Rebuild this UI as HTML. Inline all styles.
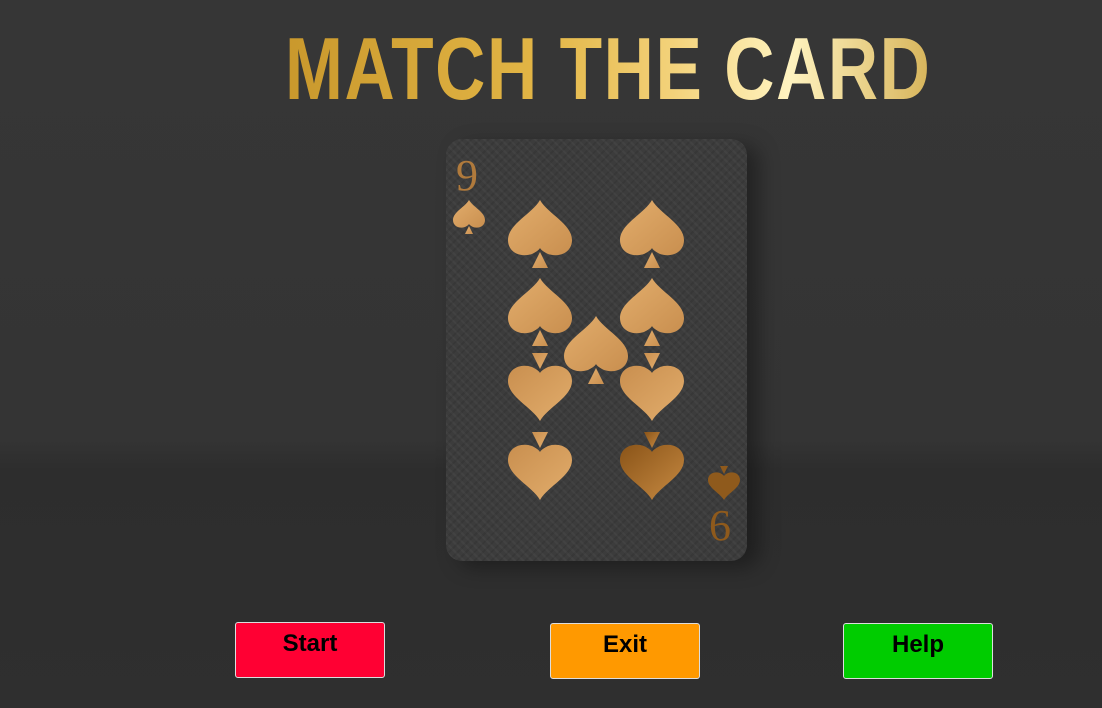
<!DOCTYPE html>
<html><head><meta charset="utf-8"><style>
html,body{margin:0;padding:0;}
body{width:1102px;height:708px;overflow:hidden;position:relative;
background:linear-gradient(#363636 0,#343434 440px,#2d2d2d 470px,#2f2f2f 708px);font-family:"Liberation Sans",sans-serif;}
.title{position:absolute;left:285px;top:26px;width:657px;height:90px;}
.title span{position:absolute;left:0;top:0;font-weight:bold;font-size:88px;line-height:86px;white-space:nowrap;
transform-origin:0 0;transform:scaleX(0.79);letter-spacing:2px;
background:linear-gradient(90deg,#c9982c 0%,#e3b646 40%,#f3d27a 60%,#fff3c0 78%,#d7b45a 100%);
-webkit-background-clip:text;background-clip:text;color:transparent;}
.card{position:absolute;left:446px;top:139px;width:301px;height:422px;border-radius:16px;
background:#3c3c3c;box-shadow:12px 6px 20px rgba(0,0,0,.35);
background-image:repeating-linear-gradient(45deg,rgba(255,255,255,.03) 0 2px,transparent 2px 6px),repeating-linear-gradient(-45deg,rgba(0,0,0,.08) 0 2px,transparent 2px 6px);}
.btn{position:absolute;width:150px;height:56px;border:1px solid #ddd;border-radius:3px;box-sizing:border-box;
font-weight:bold;font-size:24px;text-align:center;line-height:42px;color:#000;}
.idx{position:absolute;font-family:"Liberation Serif",serif;font-size:44px;color:#b07a3c;}
</style></head><body>
<div class="title"><span>MATCH THE CARD</span></div>
<div class="card"></div>
<svg width="1102" height="708" style="position:absolute;left:0;top:0">
<defs>
<linearGradient id="g" x1="0" y1="0" x2="1" y2="1"><stop offset="0" stop-color="#e2ad6c"/><stop offset="1" stop-color="#c98f4f"/></linearGradient>
<linearGradient id="g2" x1="0" y1="0" x2="1" y2="1"><stop offset="0" stop-color="#c78a42"/><stop offset="1" stop-color="#8a5418"/></linearGradient>
<g id="sp"><path d="M32 0C24 14 0 24 0 40C0 52 12 58 24 54C28 52 31 50 32 48C33 50 36 52 40 54C52 58 64 52 64 40C64 24 40 14 32 0Z"/><path d="M32 52L24 68L40 68Z"/></g>
</defs>
<g fill="url(#g)">
<use href="#sp" transform="translate(508,200)"/>
<use href="#sp" transform="translate(620,200)"/>
<use href="#sp" transform="translate(508,278)"/>
<use href="#sp" transform="translate(620,278)"/>
<use href="#sp" transform="translate(564,316)"/>
<use href="#sp" transform="translate(572,421) rotate(180)"/>
<use href="#sp" transform="translate(572,500) rotate(180)"/>
<use href="#sp" transform="translate(684,421) rotate(180)"/>
<use href="#sp" transform="translate(453,200) scale(0.5)"/>
</g>
<use href="#sp" fill="url(#g2)" transform="translate(684,500) rotate(180)"/>
<use href="#sp" fill="#8f5a1c" transform="translate(740,500) scale(0.5) rotate(180)"/>
</svg>
<div class="idx" style="left:456px;top:150px;">9</div>
<div class="idx" style="left:709px;top:500px;color:#8f5a1c;">6</div>
<div class="btn" style="left:235px;top:622px;background:#ff0033;">Start</div>
<div class="btn" style="left:550px;top:623px;background:#ff9900;">Exit</div>
<div class="btn" style="left:843px;top:623px;background:#00cc00;">Help</div>
</body></html>
